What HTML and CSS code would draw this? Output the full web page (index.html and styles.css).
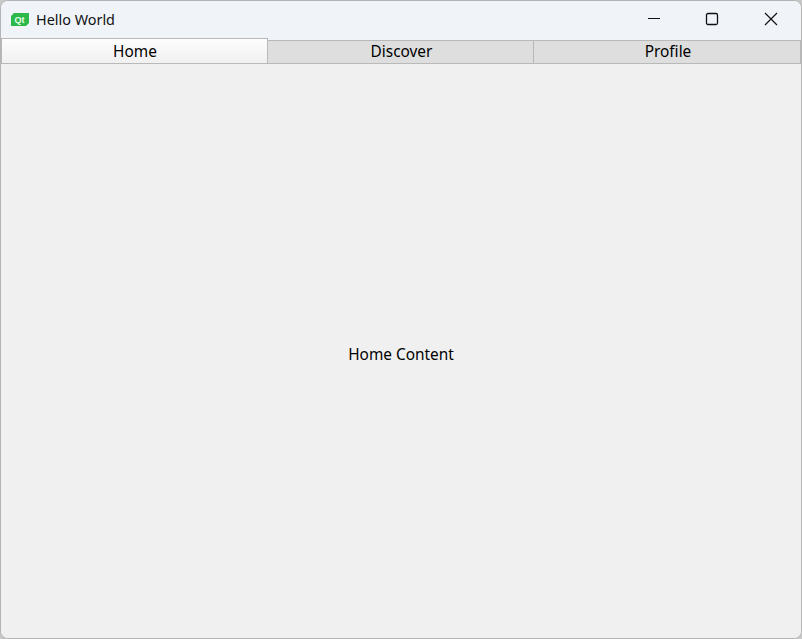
FILE: index.html
```html
<!DOCTYPE html>
<html lang="en">
<head>
<meta charset="utf-8">
<title>Hello World</title>
<link rel="stylesheet" href="styles.css">
</head>
<body>
<div class="window">
  <header class="titlebar">
    <div class="title-left">
      <svg class="app-icon" width="18" height="13" viewBox="0 0 18 13" aria-hidden="true">
        <path d="M3 0H18V10L15 13H0V3Z" fill="#2db84c"/>
        <text x="8.5" y="10" text-anchor="middle" class="app-icon-text">Qt</text>
      </svg>
      <span class="title-text">Hello World</span>
    </div>
    <div class="controls">
      <div class="control">
        <svg width="14" height="14" viewBox="0 0 14 14" aria-hidden="true"><path d="M1 6.5H13" stroke="#111" stroke-width="1" fill="none"/></svg>
      </div>
      <div class="control">
        <svg width="14" height="14" viewBox="0 0 14 14" aria-hidden="true"><rect x="1.5" y="1.5" width="11" height="11" rx="1.5" stroke="#111" stroke-width="1.3" fill="none"/></svg>
      </div>
      <div class="control control-close">
        <svg width="14" height="14" viewBox="0 0 14 14" aria-hidden="true"><path d="M1 1L13 13M13 1L1 13" stroke="#111" stroke-width="1.2" fill="none"/></svg>
      </div>
    </div>
  </header>
  <nav class="tabs">
    <div class="tab tab-active">Home</div>
    <div class="tab">Discover</div>
    <div class="tab">Profile</div>
  </nav>
  <main class="content">Home Content</main>
</div>
</body>
</html>
```
FILE: styles.css
```css
* { box-sizing: border-box; }
html, body { margin: 0; height: 100%; background: #c8c8c8; }
body { font-family: "Noto Sans", "Open Sans", sans-serif; color: #000; overflow: hidden; }
.window {
  width: 802px;
  height: 639px;
  border: 1px solid #b4b4b4;
  border-radius: 8px;
  background: #f0f0f0;
  display: flex;
  flex-direction: column;
  overflow: hidden;
}
.titlebar {
  height: 37px;
  flex: none;
  background: #f0f4f9;
  display: flex;
  align-items: flex-start;
  justify-content: space-between;
}
.title-left { display: flex; align-items: center; gap: 7px; padding-left: 10px; height: 36px; }
.app-icon { display: block; }
.app-icon-text { font-family: "Liberation Sans", sans-serif; font-size: 9px; font-weight: 700; fill: #e8ffe8; }
.title-text { font-size: 14.4px; color: #111; }
.controls { display: flex; }
.control { width: 58px; height: 36px; display: flex; align-items: center; justify-content: center; }
.control-close { width: 60px; }
.tabs {
  flex: none;
  height: 26px;
  display: grid;
  grid-template-columns: 267px 266px 1fr;
  align-items: end;
  background: #f0f4f9;
  border-bottom: 1px solid #b9b9b9;
}
.tab {
  height: 23px;
  display: flex;
  align-items: center;
  justify-content: center;
  padding: 0 0 1px 2px;
  font-size: 15.4px;
  background: #dedede;
  border-top: 1px solid #b9b9b9;
  border-right: 1px solid #b9b9b9;
}
.tab-active {
  height: 25px;
  padding: 0 0 0 1px;
  background: linear-gradient(#fdfdfd, #f0f0f0);
  border-left: 1px solid #b9b9b9;
}
.content {
  flex: 1;
  display: flex;
  align-items: center;
  justify-content: center;
  padding-top: 6px;
  font-size: 15.4px;
  background: #f0f0f0;
}
```
